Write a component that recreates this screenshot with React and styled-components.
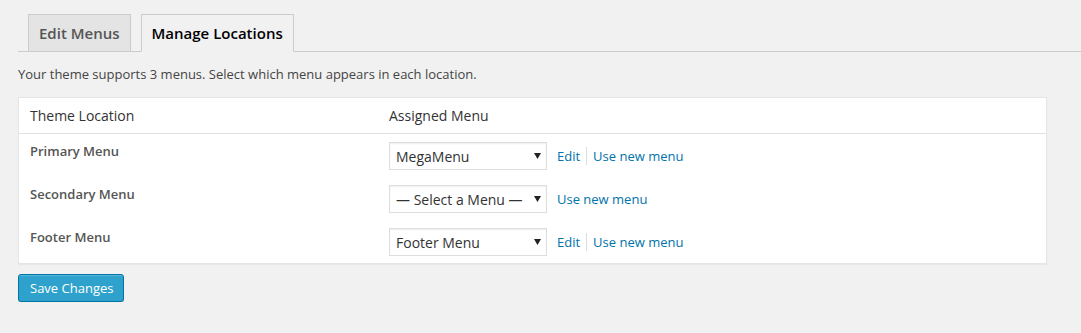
import styled, { createGlobalStyle } from 'styled-components';

const GlobalStyle = createGlobalStyle`
  html, body {
    margin: 0;
    padding: 0;
    background: #f1f1f1;
    font-family: 'Open Sans', 'Liberation Sans', sans-serif;
    font-size: 13px;
    color: #444;
  }
`;

const Page = styled.div`
  padding: 14px 0 0 18px;
`;

const TabBar = styled.div`
  display: flex;
  align-items: flex-end;
  gap: 10px;
  padding-left: 10px;
  border-bottom: 1px solid #ccc;
  height: 37px;
`;

const Tab = styled.div`
  box-sizing: border-box;
  height: 38px;
  margin-bottom: -1px;
  padding: 0 10px;
  display: flex;
  align-items: center;
  font-size: 15px;
  font-weight: 600;
  border: 1px solid #ccc;
  border-bottom-color: ${(p) => (p.active ? '#f1f1f1' : '#ccc')};
  background: ${(p) => (p.active ? '#f1f1f1' : '#e4e4e4')};
  color: ${(p) => (p.active ? '#000' : '#555')};
`;

const Intro = styled.p`
  margin: 13px 0 0;
  line-height: 18px;
  color: #444;
`;

const Table = styled.div`
  margin: 14px 34px 0 0;
  background: #fff;
  border: 1px solid #e5e5e5;
  box-shadow: 0 1px 1px rgba(0, 0, 0, 0.04);
`;

const HeadRow = styled.div`
  display: grid;
  grid-template-columns: 359px 1fr;
  height: 35px;
  align-items: center;
  padding-left: 11px;
  border-bottom: 1px solid #e1e1e1;
  font-size: 14px;
  color: #333;
`;

const Row = styled.div`
  display: grid;
  grid-template-columns: 359px 1fr;
  height: 43px;
  padding-left: 11px;
  box-sizing: border-box;
  &:first-of-type {
    height: 42px;
  }
`;

const Label = styled.div`
  padding-top: 7px;
  line-height: 20px;
  font-weight: 600;
  color: #555;
`;

const Cell = styled.div`
  display: flex;
  align-items: center;
  height: 28px;
  margin-top: 8px;
`;

const Select = styled.div`
  box-sizing: border-box;
  width: 158px;
  height: 28px;
  display: flex;
  align-items: center;
  justify-content: space-between;
  padding: 0 4px 0 6px;
  border: 1px solid #ddd;
  background: #fff;
  box-shadow: inset 0 1px 2px rgba(0, 0, 0, 0.07);
  font-size: 14px;
  color: #333;
`;

const Arrow = styled.svg`
  width: 7px;
  height: 6px;
  margin-right: 1px;
`;

const Links = styled.div`
  display: flex;
  align-items: center;
  margin-left: 10px;
  color: #0073aa;
`;

const Link = styled.a`
  color: #0073aa;
  text-decoration: none;
`;

const Sep = styled.span`
  width: 1px;
  height: 18px;
  background: #ddd;
  margin: 0 6px;
`;

const Button = styled.button`
  box-sizing: border-box;
  margin-top: 10px;
  height: 28px;
  padding: 0 10px 0 11px;
  font-family: inherit;
  font-size: 13px;
  color: #fff;
  background: #2ea2cc;
  border: 1px solid #0074a2;
  border-radius: 3px;
  box-shadow: inset 0 1px 0 rgba(120, 200, 230, 0.5), 0 1px 0 rgba(0, 0, 0, 0.15);
  cursor: pointer;
`;

const locations = [
  { name: 'Primary Menu', menu: 'MegaMenu', edit: true },
  { name: 'Secondary Menu', menu: '— Select a Menu —', edit: false },
  { name: 'Footer Menu', menu: 'Footer Menu', edit: true },
];

export default function App() {
  return (
    <Page>
      <GlobalStyle />
      <TabBar>
        <Tab>Edit Menus</Tab>
        <Tab active>Manage Locations</Tab>
      </TabBar>
      <Intro>Your theme supports 3 menus. Select which menu appears in each location.</Intro>
      <Table>
        <HeadRow>
          <span>Theme Location</span>
          <span>Assigned Menu</span>
        </HeadRow>
        {locations.map((loc) => (
          <Row key={loc.name}>
            <Label>{loc.name}</Label>
            <Cell>
              <Select>
                <span>{loc.menu}</span>
                <Arrow viewBox="0 0 7 6">
                  <path d="M0 0h7L3.5 6z" fill="#222" />
                </Arrow>
              </Select>
              <Links>
                {loc.edit && (
                  <>
                    <Link href="#">Edit</Link>
                    <Sep />
                  </>
                )}
                <Link href="#">Use new menu</Link>
              </Links>
            </Cell>
          </Row>
        ))}
      </Table>
      <Button>Save Changes</Button>
    </Page>
  );
}
